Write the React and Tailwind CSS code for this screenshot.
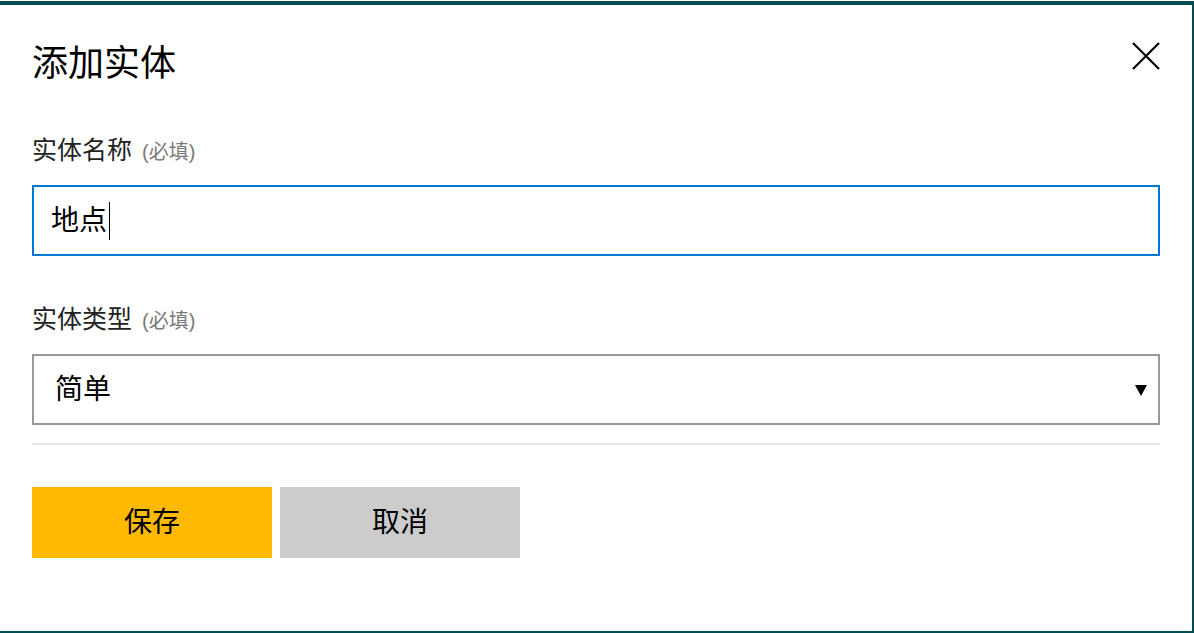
import { useState } from 'react';

const CJK = "font-['Segoe_UI','Liberation_Sans','Noto_Sans_CJK_SC',sans-serif]";

function Label({ children }) {
  return (
    <div className="flex items-baseline gap-[10px] text-[25px] leading-[25px] text-[#222]">
      <span>{children}</span>
      <span className="text-[20px] text-[#7a7a7a]">(必填)</span>
    </div>
  );
}

export default function App() {
  const [name, setName] = useState('地点');

  return (
    <div className={`w-[1194px] h-[633px] bg-white overflow-hidden ${CJK}`}>
      <div className="h-px" />

      <div className="h-[632px] border-t-4 border-r-2 border-b-2 border-[#004c51] pl-8 pr-8 flex flex-col">
        {/* Header */}
        <div className="flex justify-between items-start">
          <h1 className="mt-[41px] text-[36px] leading-[36px] text-black font-normal">添加实体</h1>
          <button className="mt-[37px] w-[28px] h-[28px] text-black" aria-label="关闭">
            <svg viewBox="0 0 28 28" className="w-[28px] h-[28px]" fill="none" stroke="currentColor" strokeWidth="2.2">
              <path d="M1 1 L27 27 M27 1 L1 27" />
            </svg>
          </button>
        </div>

        {/* Entity name */}
        <div className="mt-[56px]">
          <Label>实体名称</Label>
        </div>
        <div className="mt-[20px] h-[71px] border-2 border-[#0078d4] flex items-center pl-[17px]">
          <span className="text-[28px] leading-[28px] text-black">{name}</span>
          <span className="ml-[2px] w-px h-[38px] bg-black" />
          <input className="sr-only" value={name} onChange={(e) => setName(e.target.value)} />
        </div>

        {/* Entity type */}
        <div className="mt-[51px]">
          <Label>实体类型</Label>
        </div>
        <div className="mt-[20px] h-[71px] border-2 border-[#999] flex items-center justify-between pl-[21px] pr-[11px]">
          <span className="text-[28px] leading-[28px] text-black">简单</span>
          <svg viewBox="0 0 12 12" className="w-[12px] h-[12px]">
            <path d="M0 1 H12 L6 12 Z" fill="black" />
          </svg>
        </div>

        <div className="mt-[18px] h-[2px] bg-[#e6e6e6]" />

        {/* Actions */}
        <div className="mt-[42px] flex gap-[8px]">
          <button className="w-[240px] h-[71px] bg-[#ffb900] text-[28px] text-black">保存</button>
          <button className="w-[240px] h-[71px] bg-[#cccccc] text-[28px] text-black">取消</button>
        </div>
      </div>
    </div>
  );
}
